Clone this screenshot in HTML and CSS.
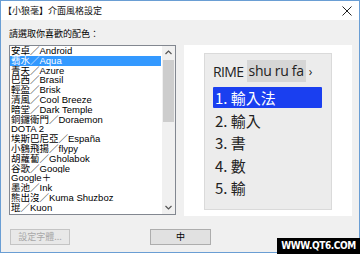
FILE: index.html
```html
<!DOCTYPE html>
<html>
<head>
<meta charset="utf-8">
<link rel="stylesheet" href="styles.css">
</head>
<body>
<div class="window">
  <div class="titlebar">
    <span class="title">【小狼毫】介面風格設定</span>
    <svg class="close" width="10" height="10" viewBox="0 0 10 10"><path d="M0.5 0.5 L9.5 9.5 M9.5 0.5 L0.5 9.5" stroke="#222" stroke-width="1" fill="none"/></svg>
  </div>
  <div class="content">
    <div class="label">請選取你喜歡的配色：</div>
    <div class="main">
      <div class="listbox">
        <ul class="items">
          <li>安卓／Android</li>
          <li class="sel">翡水／Aqua</li>
          <li>青天／Azure</li>
          <li>巴西／Brasil</li>
          <li>輕盈／Brisk</li>
          <li>清風／Cool Breeze</li>
          <li>暗堂／Dark Temple</li>
          <li>銅鑼衛門／Doraemon</li>
          <li>DOTA 2</li>
          <li>埃斯巴尼亞／España</li>
          <li>小鶴飛揚／flypy</li>
          <li>胡蘿蔔／Gholabok</li>
          <li>谷歌／Google</li>
          <li>Google＋</li>
          <li>墨池／Ink</li>
          <li>熊出沒／Kuma Shuzboz</li>
          <li>琨／Kuon</li>
        </ul>
        <div class="scrollbar">
          <svg class="arrow" width="7" height="5" viewBox="0 0 7 5"><path d="M0.5 4 L3.5 1 L6.5 4" stroke="#555" stroke-width="1.2" fill="none"/></svg>
          <div class="track"><div class="thumb"></div></div>
          <svg class="arrow" width="7" height="5" viewBox="0 0 7 5"><path d="M0.5 1 L3.5 4 L6.5 1" stroke="#555" stroke-width="1.2" fill="none"/></svg>
        </div>
      </div>
      <div class="preview-panel">
        <div class="preview">
          <div class="comp"><span class="rime">RIME</span><span class="pre">shu ru fa</span><span class="caret">›</span></div>
          <div class="cands">
            <div class="cand hl">1. 輸入法</div>
            <div class="cand">2. 輸入</div>
            <div class="cand">3. 書</div>
            <div class="cand">4. 數</div>
            <div class="cand">5. 輸</div>
          </div>
        </div>
      </div>
    </div>
    <div class="buttons">
      <button class="btn disabled">設定字體...</button>
      <button class="btn">中</button>
    </div>
  </div>
</div>
<div class="watermark">WWW.QT6.COM</div>
</body>
</html>
```
FILE: styles.css
```css
html, body {
  margin: 0;
  padding: 0;
}
body {
  width: 360px;
  height: 254px;
  background: #ffffff;
  position: relative;
  overflow: hidden;
  font-family: "Noto Sans CJK TC", "Noto Sans", sans-serif;
  color: #000;
}
.window {
  box-sizing: border-box;
  width: 360px;
  height: 253px;
  border: 1px solid #6a9ed4;
  background: #f0f0f0;
  display: flex;
  flex-direction: column;
}
.titlebar {
  height: 19px;
  background: #ffffff;
  display: flex;
  align-items: center;
  justify-content: space-between;
  padding: 0 7px 0 2px;
}
.title {
  font-size: 9px;
  line-height: 12px;
  color: #111;
}
.close {
  display: block;
  margin-top: 1px;
}
.content {
  flex: 1;
  padding: 0 7px 0 8px;
  display: flex;
  flex-direction: column;
}
.label {
  font-size: 9px;
  line-height: 12px;
  margin-top: 8px;
  height: 12px;
}
.main {
  margin-top: 5px;
  display: flex;
  gap: 8px;
  height: 171px;
}
.listbox {
  box-sizing: border-box;
  width: 167px;
  height: 170px;
  border: 1px solid #828790;
  background: #fff;
  display: flex;
}
.items {
  list-style: none;
  margin: 0;
  padding: 0;
  width: 152px;
  font-size: 9.5px;
  font-family: "Liberation Sans", "Noto Sans CJK TC", sans-serif;
}
.items li {
  height: 9.8px;
  line-height: 10px;
  padding-left: 1px;
  white-space: nowrap;
  overflow: hidden;
  color: #000;
}
.items li.sel {
  background: #3399ff;
  color: #fff;
}
.scrollbar {
  width: 13px;
  margin-left: 1px;
  background: #f0f0f0;
  display: flex;
  flex-direction: column;
  align-items: center;
}
.arrow {
  display: block;
  margin: 4px 0;
}
.track {
  flex: 1;
  width: 100%;
  display: flex;
  justify-content: center;
}
.thumb {
  margin-top: 1px;
  width: 11px;
  height: 62px;
  background: #cdcdcd;
}
.preview-panel {
  width: 168px;
  height: 171px;
  background: #fff;
  box-sizing: border-box;
  padding: 8px 20px 6px 20px;
}
.preview {
  box-sizing: border-box;
  height: 157px;
  border: 1px solid #dadada;
  background: #ececec;
  padding: 6px 6px 0 8px;
  color: #222;
  font-family: "Open Sans", "Noto Sans CJK TC", sans-serif;
}
.comp {
  display: flex;
  align-items: center;
  height: 22px;
  font-size: 14px;
  white-space: nowrap;
}
.rime {
  letter-spacing: -0.6px;
  margin-right: 3px;
}
.pre {
  background: #d6d6d6;
  height: 22px;
  line-height: 22px;
  padding: 0 2px 0 2px;
  letter-spacing: -0.3px;
}
.caret {
  margin-left: 3px;
  font-size: 12px;
}
.cands {
  margin-top: 5px;
  display: flex;
  flex-direction: column;
  gap: 1.5px;
}
.cand {
  height: 21px;
  line-height: 21px;
  font-size: 15px;
  padding-left: 2px;
  width: 109px;
  box-sizing: border-box;
  font-family: "Noto Sans CJK TC", sans-serif;
}
.cand.hl {
  background: #1a3ff0;
  color: #fff;
  border-radius: 1px;
}
.buttons {
  margin-top: 13px;
  display: flex;
  gap: 80px;
  padding-left: 1px;
}
.btn {
  box-sizing: border-box;
  width: 61px;
  height: 16px;
  padding: 0;
  margin: 0;
  border: 1px solid #adadad;
  background: #e1e1e1;
  font-family: "Noto Sans CJK TC", sans-serif;
  font-size: 9px;
  line-height: 14px;
  color: #000;
}
.btn.disabled {
  width: 60px;
  border-color: #c4c4c4;
  background: #e8e8e8;
  color: #a8a8a8;
}
.watermark {
  position: absolute;
  right: 0;
  bottom: 0;
  width: 83px;
  height: 16px;
  background: #000;
  color: #fff;
  font-family: "DejaVu Sans Condensed", "Liberation Sans Narrow", sans-serif;
  font-weight: bold;
  font-size: 10px;
  line-height: 16px;
  text-align: center;
  letter-spacing: -0.4px;
  white-space: nowrap;
}
```
